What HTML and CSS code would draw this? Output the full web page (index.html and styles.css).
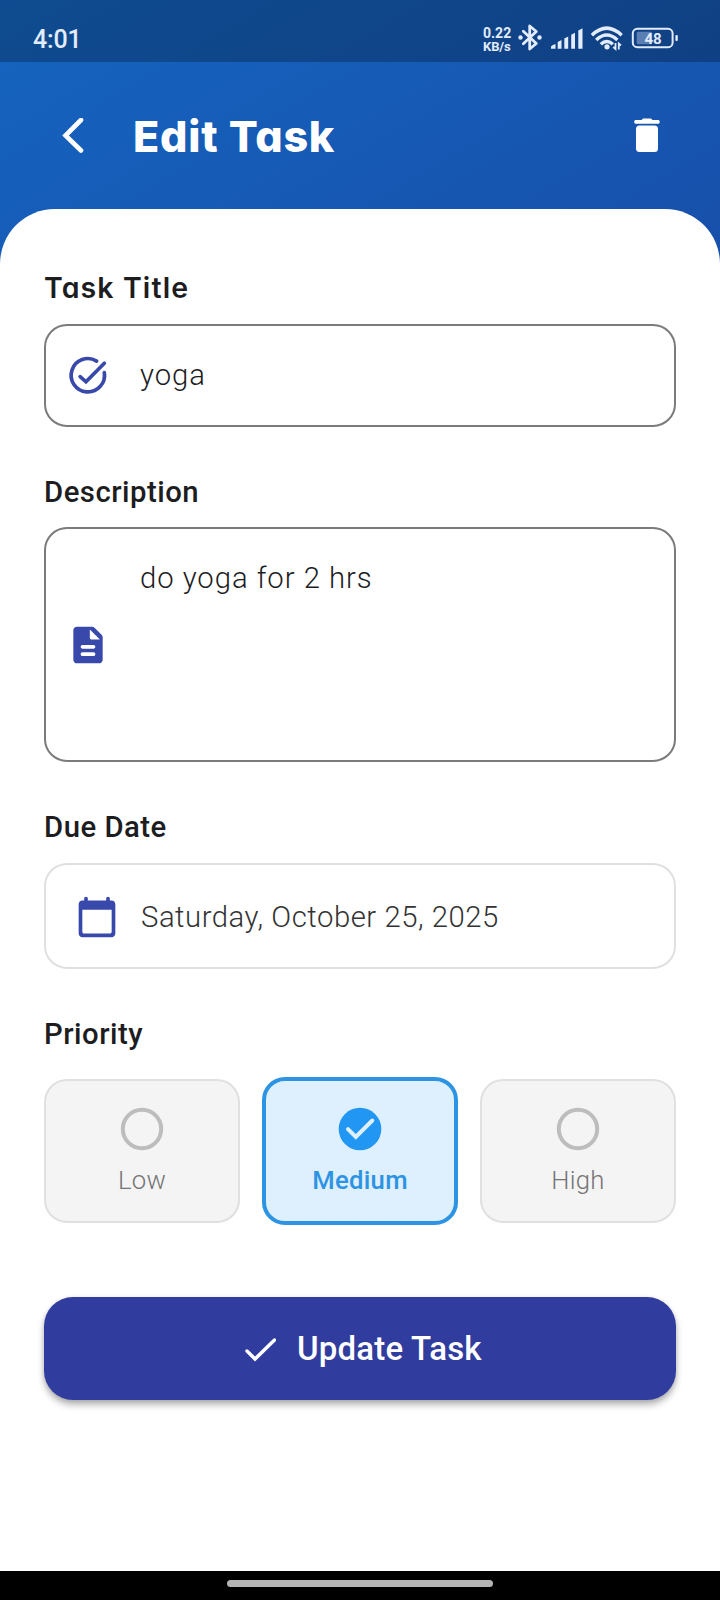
FILE: index.html
```html
<!DOCTYPE html>
<html lang="en">
<head>
<meta charset="utf-8">
<title>Edit Task</title>
<link rel="stylesheet" href="styles.css">
</head>
<body>
<div class="screen">
  <div class="statusbar">
    <span class="clock">4:01</span>
    <div class="net"><span class="net-rate">0.22</span><span class="net-unit">KB/s</span></div>
    <svg class="status-icons" width="164" height="32" viewBox="0 0 164 32">
      <path d="M7.300 9.300 L20.300 21.500 L13.700 27 V4 L20.300 9.500 L7.300 21.700" fill="none" stroke="#e2ecfb" stroke-width="2.800" stroke-linejoin="round" stroke-linecap="round"/>
      <circle cx="4.500" cy="15.500" r="2.200" fill="#e2ecfb"/>
      <circle cx="23.500" cy="15.500" r="2.200" fill="#e2ecfb"/>
      <g fill="#e2ecfb">
        <path d="M35 26.700 V24.500 Q36.500 22.500 39.500 22 V26.700Z"/>
        <path d="M41.700 26.700 V20 L45.500 18 V26.700Z"/>
        <path d="M48.300 26.700 V16.500 L52.200 14.500 V26.700Z"/>
        <path d="M55.200 26.700 V12.800 L59 10.800 V26.700Z"/>
        <path d="M62.300 26.700 V8.500 L66.500 6.300 V26.700Z"/>
      </g>
      <g fill="none" stroke="#e2ecfb" stroke-width="3.400">
        <path d="M75.900 13.200 Q90.700 -1 105.700 13.200"/>
        <path d="M80.200 18 Q90.700 8 101.400 18"/>
        <path d="M84.800 22.300 Q90.700 16.800 96.900 22.300"/>
      </g>
      <circle cx="91" cy="24.800" r="2.600" fill="#e2ecfb"/>
      <path d="M99.500 21 V27 L97.300 25 M102.800 27.500 V21.500 L105 23.500" fill="none" stroke="#e2ecfb" stroke-width="1.800"/>
      <rect x="116.800" y="6.800" width="39.800" height="18.400" rx="4.500" fill="none" stroke="#e2ecfb" stroke-width="2"/>
      <rect x="120.700" y="9.700" width="15.500" height="12.600" rx="1.500" fill="#5c7fb3"/>
      <rect x="159.400" y="13" width="2.400" height="6" rx="1" fill="#e2ecfb"/>
      <text class="battery-level" x="137" y="21.500" text-anchor="middle">48</text>
    </svg>
  </div>

  <header class="appbar">
    <svg class="back" width="22" height="36" viewBox="0 0 22 36"><path d="M19 2 L3.500 17.500 L19 32.500" fill="none" stroke="#fff" stroke-width="4.600" stroke-linecap="round"/></svg>
    <h1 class="title">Edit Task</h1>
    <svg class="trash" width="26" height="35" viewBox="0 0 26 35" fill="#fff">
      <path d="M7.500 2 L9 0.500 H17 L18.500 2 H24.500 Q25.700 2 25.700 4 Q25.700 5.700 24.500 5.700 H1.500 Q0.200 5.700 0.200 4 Q0.200 2 1.500 2Z"/>
      <rect x="2" y="7.500" width="22" height="26.500" rx="3.500"/>
    </svg>
  </header>

  <main class="sheet">
    <h2 class="label label-geo">Task Title</h2>
    <div class="field field-title">
      <svg class="field-icon" width="44" height="44" viewBox="0 0 24 24"><path d="M16.700 4.400 A9.100 9.100 0 1 0 20.900 10.700 M7.700 12.900 L10.900 15.700 L20.900 5.600" fill="none" stroke="#3949ab" stroke-width="2" stroke-linecap="round"/></svg>
      <span class="value">yoga</span>
    </div>

    <h2 class="label">Description</h2>
    <div class="field field-description">
      <svg class="field-icon" width="44" height="44" viewBox="0 0 24 24" fill="#3949ab"><path d="M14.170 2H6c-1.100 0-2 .9-2 2v16c0 1.100.9 2 2 2h12c1.100 0 2-.9 2-2V7.830c0-.53-.21-1.040-.59-1.410l-3.830-3.830C15.210 2.210 14.700 2 14.170 2zM15 18H9c-.55 0-1-.45-1-1s.45-1 1-1h6c.55 0 1 .45 1 1s-.45 1-1 1zm0-4H9c-.55 0-1-.45-1-1s.45-1 1-1h6c.55 0 1 .45 1 1s-.45 1-1 1zm-2-6V3.500L18.500 9H14c-.55 0-1-.45-1-1z"/></svg>
      <span class="value value-top">do yoga for 2 hrs</span>
    </div>

    <h2 class="label">Due Date</h2>
    <div class="field field-date">
      <svg class="field-icon" width="44" height="44" viewBox="0 0 24 24" fill="#3949ab"><path d="M20 3h-1V2c0-.55-.45-1-1-1s-1 .45-1 1v1H7V2c0-.55-.45-1-1-1s-1 .45-1 1v1H4c-1.100 0-2 .9-2 2v16c0 1.100.9 2 2 2h16c1.100 0 2-.9 2-2V5c0-1.100-.9-2-2-2zm-1 18H5c-.55 0-1-.45-1-1V8h16v12c0 .55-.45 1-1 1z"/></svg>
      <span class="value value-date">Saturday, October 25, 2025</span>
    </div>

    <h2 class="label">Priority</h2>
    <div class="priorities">
      <div class="card">
        <svg width="44" height="44" viewBox="0 0 44 44"><circle cx="22" cy="22" r="19.200" fill="none" stroke="#bdbdbd" stroke-width="4"/></svg>
        <span class="card-label">Low</span>
      </div>
      <div class="card selected">
        <svg width="44" height="44" viewBox="0 0 44 44"><circle cx="22" cy="22" r="21.300" fill="#2196f3"/><path d="M10 22.200 L17.800 30 L34.300 13.500" fill="none" stroke="#def0fe" stroke-width="4" stroke-linecap="round"/></svg>
        <span class="card-label">Medium</span>
      </div>
      <div class="card">
        <svg width="44" height="44" viewBox="0 0 44 44"><circle cx="22" cy="22" r="19.200" fill="none" stroke="#bdbdbd" stroke-width="4"/></svg>
        <span class="card-label">High</span>
      </div>
    </div>

    <div class="submit">
      <svg class="submit-check" width="32" height="26" viewBox="0 0 32 26"><path d="M3 14 L11 22 L30.500 3" fill="none" stroke="#fff" stroke-width="3.400" stroke-linecap="round"/></svg>
      <span class="submit-label">Update Task</span>
    </div>
  </main>
  <div class="navbar"><div class="handle"></div></div>
</div>
</body>
</html>
```
FILE: styles.css
```css
* { box-sizing: border-box; }
body { margin: 0; font-family: Roboto, sans-serif; }
h1, h2 { margin: 0; }
svg { display: block; flex: none; }
.screen {
  width: 720px; height: 1600px; overflow: hidden;
  display: flex; flex-direction: column;
  background: linear-gradient(150deg, #1565c0 0%, #174ea9 100%) 0 0 / 720px 300px no-repeat;
}
.statusbar {
  height: 62px; flex: none; display: flex; align-items: flex-start;
  padding: 22px 40px 0 33px; background: rgba(0, 0, 0, .25); color: #e2ecfb;
}
.clock { font-size: 25px; line-height: 36px; font-weight: 500; width: 60px; letter-spacing: -.2px; white-space: nowrap; }
.net {
  margin-left: auto; margin-top: 5px; margin-right: 4px; width: 29px;
  display: flex; flex-direction: column; font-weight: 700; white-space: nowrap;
}
.net-rate { font-size: 14px; line-height: 13px; }
.net-unit { font-size: 13px; line-height: 13px; letter-spacing: -.1px; }
.battery-level { font: 700 15px Roboto, sans-serif; fill: #e2ecfb; }
.appbar { height: 147px; flex: none; display: flex; align-items: center; padding: 0 60px 0 62px; }
.title {
  margin-left: 49px; flex: 1; color: #fff; white-space: nowrap;
  font: 800 43px/60px Inter, sans-serif; font-feature-settings: "cv11"; letter-spacing: .8px;
}
.sheet {
  flex: 1; background: #fff; border-radius: 55px 55px 0 0; padding: 61px 44px 0;
  display: flex; flex-direction: column;
}
.label {
  font-size: 29.3px; line-height: 36px; font-weight: 500; color: #1d1d1f;
  letter-spacing: .5px; margin-bottom: 17px; white-space: nowrap;
}
.label-geo { font-family: Inter, sans-serif; font-weight: 600; font-size: 28.5px; letter-spacing: 1.1px; font-feature-settings: "cv11"; }
.field {
  display: flex; align-items: center; border: 2px solid #7b7b7d; border-radius: 23px;
  padding-left: 20px; flex: none;
}
.field-title { height: 103px; margin-bottom: 47px; margin-top: 1px; padding-bottom: 2px; }
.field-description { height: 235px; margin-bottom: 47px; }
.field-date { height: 106px; margin-bottom: 47px; margin-top: 1px; border-color: #e0e0e0; padding: 2px 0 0 29px; }
.value {
  font-size: 29.3px; line-height: 36px; font-weight: 300; color: #1d1d1f;
  letter-spacing: .95px; margin-left: 30px; white-space: nowrap;
}
.value-top { align-self: flex-start; margin-top: 31px; }
.value-date { margin-left: 22px; letter-spacing: .52px; color: #333; }
.priorities {
  display: grid; grid-template-columns: repeat(3, 196px); gap: 22px; height: 148px;
  align-items: center; margin-top: 8px; flex: none;
}
.card {
  height: 144px; display: flex; flex-direction: column; align-items: center;
  background: #f4f4f4; border: 2px solid #e0e0e0; border-radius: 23px; padding-top: 26px;
}
.selected { height: 148px; background: #def0fe; border: 4px solid #2d93e3; }
.card-label { font-size: 25.7px; line-height: 34px; margin-top: 12px; font-weight: 300; color: #757575; letter-spacing: .3px; white-space: nowrap; }
.selected .card-label { font-weight: 500; color: #2d93e3; }
.submit {
  height: 103px; margin-top: 72px; flex: none; border-radius: 29px; background: #303c9e; color: #fff;
  display: flex; align-items: center; padding-left: 200px;
  box-shadow: 0 5px 7px rgba(0, 0, 0, .28), 0 1px 4px rgba(0, 0, 0, .12);
}
.submit-check { margin-top: 2px; }
.submit-label { font-size: 33px; line-height: 40px; font-weight: 500; margin-left: 21px; letter-spacing: .2px; white-space: nowrap; }
.navbar { height: 29px; flex: none; background: #000; display: flex; justify-content: center; padding-top: 9px; }
.handle { width: 266px; height: 7px; border-radius: 4px; background: #b4b4b4; }
```
